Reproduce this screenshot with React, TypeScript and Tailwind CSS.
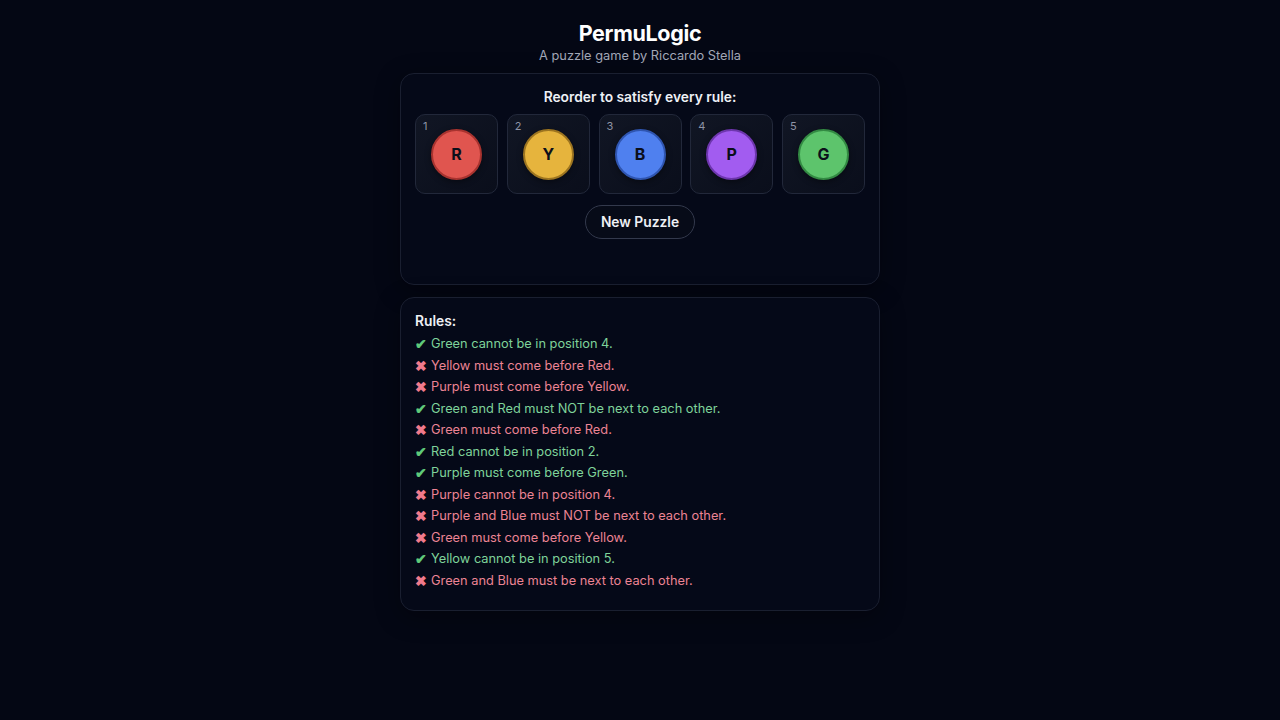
import React from 'react'

type Ball = { pos: number; letter: string; fill: string; ring: string }

const balls: Ball[] = [
  { pos: 1, letter: 'R', fill: 'bg-[#e0554f]', ring: 'border-[#a8332f]' },
  { pos: 2, letter: 'Y', fill: 'bg-[#e6b43d]', ring: 'border-[#9c7420]' },
  { pos: 3, letter: 'B', fill: 'bg-[#4f80ef]', ring: 'border-[#2f55b0]' },
  { pos: 4, letter: 'P', fill: 'bg-[#a25cf0]', ring: 'border-[#6d36ad]' },
  { pos: 5, letter: 'G', fill: 'bg-[#5dc46c]', ring: 'border-[#338a43]' },
]

const rules: { ok: boolean; text: string }[] = [
  { ok: true, text: 'Green cannot be in position 4.' },
  { ok: false, text: 'Yellow must come before Red.' },
  { ok: false, text: 'Purple must come before Yellow.' },
  { ok: true, text: 'Green and Red must NOT be next to each other.' },
  { ok: false, text: 'Green must come before Red.' },
  { ok: true, text: 'Red cannot be in position 2.' },
  { ok: true, text: 'Purple must come before Green.' },
  { ok: false, text: 'Purple cannot be in position 4.' },
  { ok: false, text: 'Purple and Blue must NOT be next to each other.' },
  { ok: false, text: 'Green must come before Yellow.' },
  { ok: true, text: 'Yellow cannot be in position 5.' },
  { ok: false, text: 'Green and Blue must be next to each other.' },
]

export default function App() {
  return (
    <div className="min-h-screen bg-[#040714] font-['Inter',sans-serif] text-white">
      <div className="mx-auto flex w-[480px] flex-col items-center pt-[20px]">
        <h1 className="text-[21.5px] font-bold leading-[26px] tracking-[-0.015em]">PermuLogic</h1>
        <p className="mt-[1px] text-[12.8px] leading-[18px] text-[#a3a8b8]">A puzzle game by Riccardo Stella</p>

        <div className="mt-[8px] flex h-[212px] w-full flex-col items-center rounded-[14px] border border-[#1a1f30] bg-[#050918] px-[14px] pt-[14px] shadow-[0_6px_24px_rgba(0,0,0,0.35)]">
          <p className="text-[13.8px] font-semibold leading-[18px] text-[#eef0f5]">Reorder to satisfy every rule:</p>
          <div className="mt-[8px] flex w-full gap-[8.75px]">
            {balls.map((b) => (
              <div
                key={b.pos}
                className="relative flex h-[80px] flex-1 items-center justify-center rounded-[10px] border border-[#22283a] bg-gradient-to-br from-[#111624] to-[#0a0e1b]"
              >
                <span className="absolute left-[7px] top-[5px] text-[11px] leading-[13px] text-[#8e94a6]">{b.pos}</span>
                <div
                  className={`flex h-[51px] w-[51px] items-center justify-center rounded-full border-2 ${b.fill} ${b.ring} shadow-[0_2px_6px_rgba(0,0,0,0.4)]`}
                >
                  <span className="text-[16px] font-bold text-[#0b0f1a]">{b.letter}</span>
                </div>
              </div>
            ))}
          </div>
          <button
            type="button"
            className="mt-[11px] h-[34px] w-[110px] rounded-full border border-[#33394c] bg-[#070b18] text-[13.8px] font-semibold text-[#eef0f5]"
          >
            New Puzzle
          </button>
        </div>

        <div className="mt-[12px] w-full rounded-[14px] border border-[#1a1f30] bg-[#050918] px-[14px] pb-[19px] pt-[13px] shadow-[0_6px_24px_rgba(0,0,0,0.35)]">
          <p className="text-[13.8px] font-semibold leading-[20px] text-[#eef0f5]">Rules:</p>
          <ul className="mt-[2px]">
            {rules.map((r, i) => (
              <li
                key={i}
                className={`flex items-center gap-[3px] text-[12.8px] leading-[21.5px] ${r.ok ? 'text-[#7fd39a]' : 'text-[#ec8494]'}`}
              >
                <span className={`w-[13px] text-[14px] font-bold ${r.ok ? 'text-[#5fc97a]' : 'text-[#f07a8c]'}`}>{r.ok ? '✔' : '✖'}</span>
                <span>{r.text}</span>
              </li>
            ))}
          </ul>
        </div>
      </div>
    </div>
  )
}
